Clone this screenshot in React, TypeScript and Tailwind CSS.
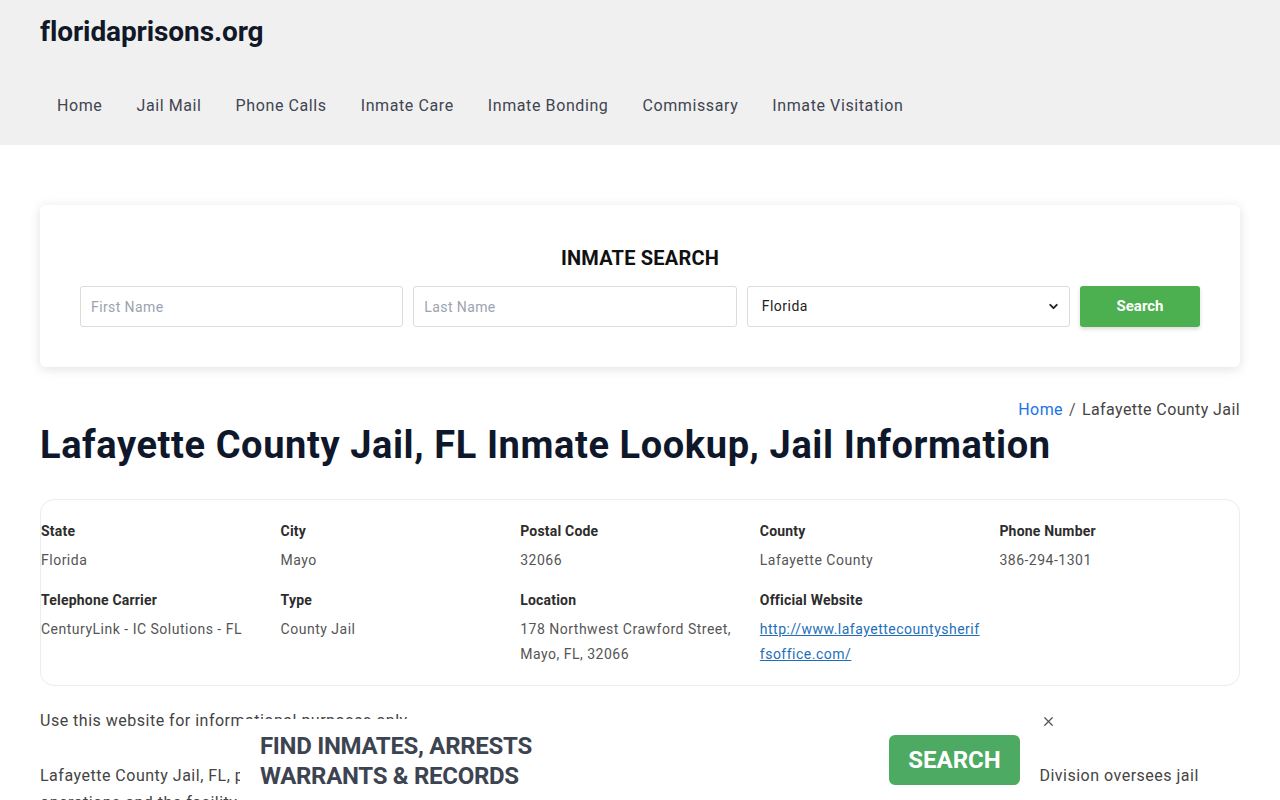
import { ChevronDown, X } from "lucide-react"

const NAV = ["Home", "Jail Mail", "Phone Calls", "Inmate Care", "Inmate Bonding", "Commissary", "Inmate Visitation"]

const INFO = [
  { label: "State", value: ["Florida"] },
  { label: "City", value: ["Mayo"] },
  { label: "Postal Code", value: ["32066"] },
  { label: "County", value: ["Lafayette County"] },
  { label: "Phone Number", value: ["386-294-1301"] },
  { label: "Telephone Carrier", value: ["CenturyLink - IC Solutions - FL"] },
  { label: "Type", value: ["County Jail"] },
  { label: "Location", value: ["178 Northwest Crawford Street,", "Mayo, FL, 32066"] },
  { label: "Official Website", value: ["http://www.lafayettecountysherif", "fsoffice.com/"], link: true },
]

export default function App() {
  return (
    <div className="min-h-screen bg-white font-['Roboto',sans-serif] text-[#3f4450] relative overflow-hidden h-[800px]">
      {/* header */}
      <header className="bg-[#f0f0f0] h-[145px] px-10 pt-[14px]">
        <a className="block text-[28px] font-bold text-[#111827] leading-[36px] tracking-[-0.1px]">floridaprisons.org</a>
        <nav className="flex mt-[44px]">
          {NAV.map((item) => (
            <a key={item} className="px-[17px] text-[16px] leading-[24px] text-[#3f4450] tracking-[0.6px]">
              {item}
            </a>
          ))}
        </nav>
      </header>

      <main className="px-10">
        {/* search card */}
        <section className="mt-[60px] bg-white rounded-[6px] shadow-[0_2px_12px_rgba(0,0,0,0.12)] px-10 pt-[40px] pb-[40px]">
          <h2 className="text-center text-[20px] font-bold text-[#111] leading-[26px] mb-[15px] tracking-[0.2px]">INMATE SEARCH</h2>
          <div className="grid grid-cols-[1fr_1fr_1fr_120px] gap-[10px]">
            <input
              placeholder="First Name"
              className="min-w-0 h-[41px] border border-[#dcdcdc] rounded-[3px] px-[10px] text-[14px] tracking-[0.4px] placeholder:text-[#9ca3af] outline-none"
            />
            <input
              placeholder="Last Name"
              className="min-w-0 h-[41px] border border-[#dcdcdc] rounded-[3px] px-[10px] text-[14px] tracking-[0.4px] placeholder:text-[#9ca3af] outline-none"
            />
            <div className="min-w-0 relative">
              <select className="w-full h-[41px] appearance-none border border-[#dcdcdc] rounded-[3px] px-[14px] text-[14px] tracking-[0.5px] text-[#222] bg-white outline-none">
                <option>Florida</option>
              </select>
              <ChevronDown size={13} strokeWidth={3.5} className="absolute right-[10px] top-[14px] text-[#222]" />
            </div>
            <button className="h-[41px] bg-[#4caf50] rounded-[3px] text-white font-bold text-[15px] shadow-[0_2px_4px_rgba(0,0,0,0.15)]">
              Search
            </button>
          </div>
        </section>

        {/* breadcrumb */}
        <div className="flex justify-end mt-[32px] text-[16px] leading-[22px] tracking-[0.4px]">
          <a className="text-[#1a73e8]">Home</a>
          <span className="mx-[6px] text-[#555]">/</span>
          <span className="text-[#444]">Lafayette County Jail</span>
        </div>

        <h1 className="mt-[1px] text-[38px] font-bold text-[#0f172a] leading-[46px] tracking-[0.6px]">
          Lafayette County Jail, FL Inmate Lookup, Jail Information
        </h1>

        {/* info card */}
        <section className="mt-[31px] border border-[#ececec] rounded-[14px] pt-[21px] pb-[18px] grid grid-cols-5 gap-y-[17px]">
          {INFO.map((f) => (
            <div key={f.label} className="text-[14px] tracking-[0.5px]">
              <div className="font-bold text-[#2d2d2d] leading-[20px] tracking-[0.2px]">{f.label}</div>
              <div className="mt-[7px] leading-[25px] text-[#555]">
                {f.value.map((v) =>
                  f.link ? (
                    <a key={v} className="block text-[#1e6fb8] underline">{v}</a>
                  ) : (
                    <div key={v}>{v}</div>
                  )
                )}
              </div>
            </div>
          ))}
        </section>

        <p className="mt-[23px] text-[16px] leading-[24px] text-[#444] tracking-[0.5px]">Use this website for informational purposes only.</p>
        <p className="mt-[29px] text-[16px] leading-[27px] text-[#444] tracking-[0.5px] whitespace-nowrap">
          Lafayette County Jail, FL, provides inmates housing, and custodial services for all of Lafayette County, the Sheriff&apos;s Office Detention Division oversees jail
          <br />
          operations and the facility is located at 178 Northwest Crawford Street, Mayo, FL, 32066.
        </p>
      </main>

      {/* sticky ad overlay */}
      <div className="absolute left-[240px] top-[719px] w-[795px] h-[81px] bg-white flex items-start pl-[20px] pt-[12px]">
        <div className="text-[24px] font-bold text-[#3d4451] leading-[30px] tracking-[-0.3px]">
          <div>FIND INMATES, ARRESTS</div>
          <div>WARRANTS &amp; RECORDS</div>
        </div>
        <button className="ml-auto mr-[15px] mt-[4px] w-[131px] h-[50px] bg-[#4caa62] rounded-[6px] text-white font-bold text-[24px]">
          SEARCH
        </button>
      </div>
      <X size={15} strokeWidth={2} className="absolute left-[1041px] top-[714px] text-[#555]" />
    </div>
  )
}
